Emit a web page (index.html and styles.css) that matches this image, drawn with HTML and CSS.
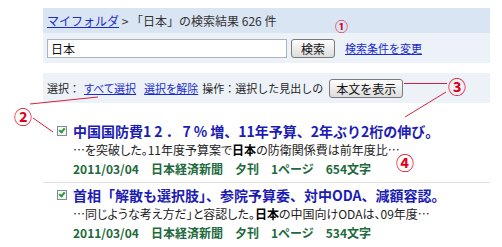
FILE: index.html
```html
<!DOCTYPE html>
<html>
<head>
  <title>検索結果</title>
  <link rel="stylesheet" href="styles.css">
</head>
<body>
  <div class="page">
    <div class="search-panel">
      <div class="crumbs">
        <a href="#" class="link">マイフォルダ</a> &gt; 「日本」の検索結果 626 件
      </div>
      <div class="search-row">
        <input class="query" value="日本">
        <button class="btn search-button">検索</button>
        <a href="#" class="link change-link">検索条件を変更</a>
      </div>
    </div>

    <div class="select-panel">
      <span>選択：</span><a href="#" class="link">すべて選択</a>
      <a href="#" class="link">選択を解除</a>
      <span class="ops">操作：選択した見出しの</span>
      <button class="btn show-button">本文を表示</button>
    </div>

    <div class="results">
      <div class="item">
        <div class="title-row">
          <span class="check"></span>
          <span class="title">中国国防費<span class="spaced">12．7%</span>増、11年予算、2年ぶり2桁の伸び。</span>
        </div>
        <div class="snippet">…を突破した。11年度予算案で<b>日本</b>の防衛関係費は前年度比…</div>
        <div class="meta">2011/03/04　日本経済新聞　夕刊　1ページ　654文字</div>
      </div>
      <div class="item">
        <div class="title-row">
          <span class="check"></span>
          <span class="title">首相「解散も選択肢」、参院予算委、対中ODA、減額容認。</span>
        </div>
        <div class="snippet">…同じような考え方だ」と容認した。<b>日本</b>の中国向けODAは、09年度…</div>
        <div class="meta">2011/03/04　日本経済新聞　夕刊　1ページ　534文字</div>
      </div>
    </div>
  </div>

  <div class="notes">
    <svg class="note-lines" width="502" height="247">
      <line x1="404" y1="83.5" x2="447" y2="83.5"></line>
      <line x1="446" y1="92" x2="405" y2="117"></line>
      <line x1="30" y1="104" x2="98" y2="97"></line>
      <line x1="33" y1="118" x2="53" y2="132"></line>
    </svg>
    <span class="mark mark-1">①</span>
    <span class="mark mark-2">②</span>
    <span class="mark mark-3">③</span>
    <span class="mark mark-4">④</span>
  </div>
</body>
</html>
```

FILE: styles.css
```css
body {
  margin: 0;
  background-color: #fff;
  font-family: "Noto Sans CJK JP", sans-serif;
  font-size: 12px;
  color: #222;
  position: relative;
  width: 502px;
  height: 247px;
  overflow: hidden;
}

.page {
  margin-left: 43px;
  padding-top: 8px;
  width: 447px;
}

.link {
  color: #1a2ccc;
  text-decoration: underline;
}

.search-panel {
  background-color: #edf2f9;
}

.crumbs {
  background-color: #d9e5f3;
  height: 25px;
  line-height: 25px;
  padding-left: 4px;
  color: #333;
}

.search-row {
  display: flex;
  align-items: center;
  height: 30px;
  padding-left: 4px;
}

.query {
  width: 240px;
  height: 19px;
  box-sizing: border-box;
  border: 1px solid #a9b4c2;
  padding: 0 3px;
  font-family: inherit;
  font-size: 12px;
  color: #111;
  margin: 0;
}

.btn {
  height: 19px;
  box-sizing: border-box;
  border: 1px solid #7a7a7a;
  border-radius: 3px;
  background: linear-gradient(#fdfdfd, #dcdcdc);
  font-family: inherit;
  font-size: 12px;
  line-height: 15px;
  padding: 0;
  color: #111;
}

.search-button {
  width: 44px;
  margin-left: 4px;
}

.change-link {
  margin-left: 10px;
  font-size: 11px;
}

.select-panel {
  margin-top: 10px;
  background-color: #edf2f9;
  height: 30px;
  display: flex;
  align-items: center;
  padding-left: 4px;
  font-size: 11px;
}

.select-panel > span:first-child {
  margin-right: 4px;
}

.select-panel .link {
  font-feature-settings: "palt";
}

.select-panel .link + .link {
  margin-left: 8px;
}

.ops {
  margin-left: 4px;
}

.show-button {
  width: 74px;
  margin-left: 6px;
}

.results {
  margin-top: 16px;
}

.item {
  padding: 3px 0 4px 14px;
  border-bottom: 1px solid #e2e2e2;
}

.item:last-child {
  border-bottom: none;
}

.title-row {
  display: flex;
  align-items: center;
  height: 18px;
}

.check {
  width: 10px;
  height: 10px;
  box-sizing: border-box;
  border: 1px solid #7d8a99;
  background-color: #f4f7f4;
  margin-right: 6px;
  position: relative;
}

.check::after {
  content: "";
  position: absolute;
  left: 2px;
  top: 0px;
  width: 2px;
  height: 4px;
  border: solid #2a9a3a;
  border-width: 0 2px 2px 0;
  transform: rotate(40deg);
}

.title {
  color: #1c1cb4;
  font-size: 14px;
  font-weight: bold;
  line-height: 18px;
  white-space: nowrap;
}

.spaced {
  letter-spacing: 3px;
}

.snippet {
  padding-left: 16px;
  height: 19px;
  line-height: 19px;
  font-size: 12px;
  font-feature-settings: "palt";
  color: #222;
  white-space: nowrap;
}

.snippet b {
  color: #000;
}

.meta {
  padding-left: 16px;
  height: 19px;
  line-height: 19px;
  font-size: 12px;
  font-weight: bold;
  color: #1d6a3a;
  white-space: nowrap;
}

.notes {
  position: absolute;
  left: 0;
  top: 0;
  width: 502px;
  height: 247px;
  pointer-events: none;
}

.note-lines {
  position: absolute;
  left: 0;
  top: 0;
}

.note-lines line {
  stroke: #d8203c;
  stroke-width: 1;
}

.mark {
  position: absolute;
  color: #e0001a;
  font-size: 18px;
  line-height: 18px;
  font-weight: bold;
}

.mark-1 {
  left: 335px;
  top: 19px;
  font-size: 13px;
  line-height: 13px;
}

.mark-2 {
  left: 14px;
  top: 107px;
}

.mark-3 {
  left: 448px;
  top: 77px;
}

.mark-4 {
  left: 396px;
  top: 155px;
  line-height: 14px;
}
```
